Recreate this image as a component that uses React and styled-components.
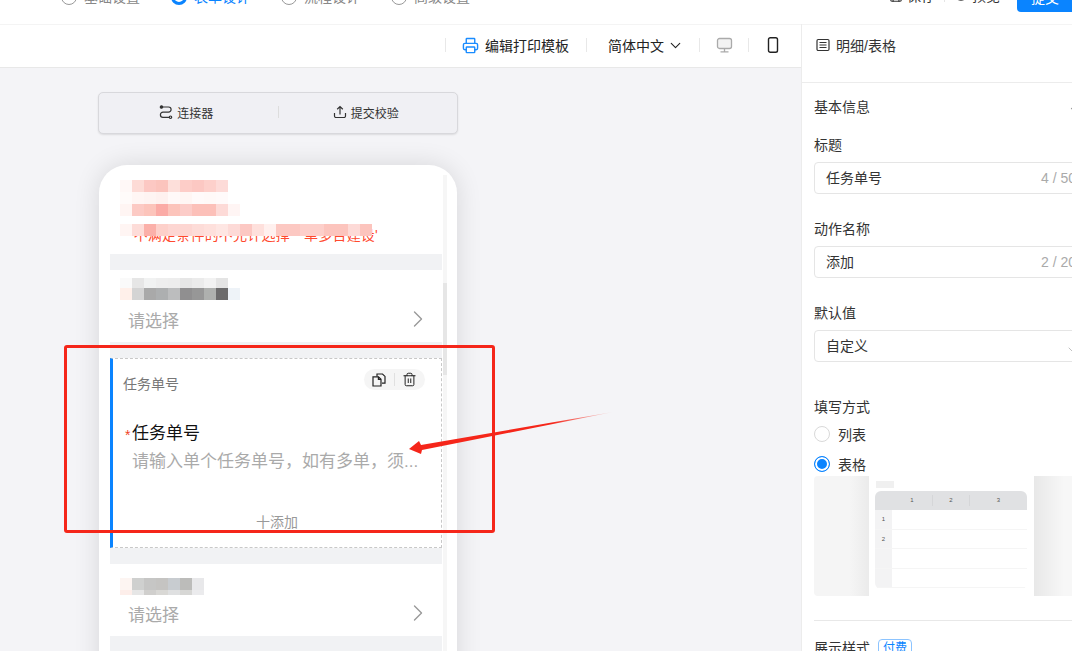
import styled, { createGlobalStyle } from 'styled-components'
import { ChevronDown, ChevronRight, ChevronUp, Printer, Save, Trash2, Eye } from 'lucide-react'

const GlobalStyle = createGlobalStyle`
    html, body {
        margin: 0;
        padding: 0;
        background: #fff;
        font-family: "Liberation Sans", "Noto Sans CJK SC", sans-serif;
        color: #222;
    }
    * {
        box-sizing: border-box;
    }
`

const steps = [
    { name: '基础设置', active: false },
    { name: '表单设计', active: true },
    { name: '流程设计', active: false },
    { name: '高级设置', active: false },
]

const mosaics = {
    top: [
        ['#fff8f7', '#fddbd6', '#fcc8c3', '#fbc4bd', '#fddfda', '#fdcdc8', '#fcc8c3', '#fdd0cb', '#fddbd8'],
        ['#fffbfa', '#fff6f4', '#fef4f2', '#fef1ef', '#fff9f8', '#fff6f4', '#fffafa', '#fff9f8', '#fffafa'],
        ['#fff5f3', '#fccac4', '#fcc4bb', '#fbaba6', '#fcc4bb', '#fcccc8', '#fcc0b9', '#fcc0b9', '#fddad7', '#fff5f4'],
    ],
    warn: [
        ['#fff5f3', '#fddcd8', '#fbb0a9', '#fdd0ca', '#fdd6d2', '#fdd6d2', '#fddcd8', '#fee0dc', '#fee6e3', '#fddad7', '#fcc8c3', '#fee0dc', '#fff0ee', '#fcc8c2', '#fcc8c2', '#fdcfca', '#fdcfca', '#fcc4bd', '#fcc4bd', '#fddad7', '#fcc4bd'],
    ],
    person: [
        ['#fafafa', '#e6e6e6', '#f1f2f2', '#eeeeee', '#ededed', '#e6e6e6', '#ebebeb', '#f2f2f2', '#e4e4e4'],
        ['#fff0ea', '#d4d4d4', '#a9a9a9', '#adafb0', '#bcbdbe', '#908f90', '#979797', '#aeb0ae', '#6c6b6c', '#eef3f8'],
    ],
    last: [
        ['#fdf5f2', '#cfd0cf', '#c6c6c5', '#c5c4c2', '#c8ccd0', '#bcbcba', '#e8e8ea'],
        ['#fdeeea', '#e6e6e6', '#d0cfcd', '#d9d8d5', '#dfe0e1', '#d7d7d5', '#ebebed'],
    ],
}

function Blur({ rows, h, top, cell = 12 }) {
    return (
        <MosaicBox $top={top}>
            {rows.map((row, i) => (
                <MosaicRow key={i}>
                    {row.map((c, j) => (
                        <MosaicCell key={j} $w={cell} $h={h[i]} $c={c} />
                    ))}
                </MosaicRow>
            ))}
        </MosaicBox>
    )
}

function PickerCard({ rows, h, top }) {
    return (
        <PickCard>
            <Blur rows={rows} h={h} top={top} />
            <PickLine>
                <span>请选择</span>
                <ChevronRight size={28} strokeWidth={1.2} color="#999" />
            </PickLine>
        </PickCard>
    )
}

export default function App() {
    return (
        <Page>
            <GlobalStyle />
            <TopBar>
                <Steps>
                    {steps.map((s) => (
                        <Step key={s.name} $active={s.active}>
                            <StepDot $active={s.active} />
                            {s.name}
                        </Step>
                    ))}
                </Steps>
                <TopActions>
                    <TopAction><Save size={14} />保存</TopAction>
                    <TopDivider />
                    <TopAction><Eye size={14} />预览</TopAction>
                    <SubmitBtn>提交</SubmitBtn>
                </TopActions>
            </TopBar>

            <Body>
                <Work>
                    <Toolbar>
                        <ToolDivider />
                        <PrintLink>
                            <Printer size={17} color="#1a8cff" strokeWidth={2} />
                            <span>编辑打印模板</span>
                        </PrintLink>
                        <ToolDivider />
                        <LangPick>
                            简体中文
                            <ChevronDown size={17} strokeWidth={1.6} />
                        </LangPick>
                        <ToolDivider />
                        <ToolIcon>
                            <svg width="17" height="17" viewBox="0 0 17 17" fill="none" stroke="#aaa" strokeWidth="1.3">
                                <rect x="1.5" y="1.5" width="14" height="10" rx="2" fill="#f3f3f3" />
                                <path d="M8.5 11.5v3M4.5 14.8h8" />
                            </svg>
                        </ToolIcon>
                        <ToolDivider />
                        <ToolIcon>
                            <svg width="12" height="16" viewBox="0 0 12 16" fill="none" stroke="#222" strokeWidth="1.4">
                                <rect x="1.5" y="0.8" width="9" height="14.4" rx="1.8" />
                            </svg>
                        </ToolIcon>
                    </Toolbar>

                    <Canvas>
                        <BtnGroup>
                            <GroupBtn>
                                <svg width="14" height="14" viewBox="0 0 14 14" fill="none" stroke="#333" strokeWidth="1.2">
                                    <circle cx="2.5" cy="2" r="1.2" fill="#333" />
                                    <path d="M3.5 2H9.5a2.6 2.6 0 0 1 0 5.2H4a2.6 2.6 0 0 0 0 5.2H10" />
                                    <circle cx="11.5" cy="12.2" r="1.2" />
                                </svg>
                                连接器
                            </GroupBtn>
                            <GroupLine />
                            <GroupBtn>
                                <svg width="14" height="14" viewBox="0 0 14 14" fill="none" stroke="#333" strokeWidth="1.2">
                                    <path d="M7 9.5V1.5M4.2 4.2 7 1.5l2.8 2.7M1.5 8v3a1.5 1.5 0 0 0 1.5 1.5h8a1.5 1.5 0 0 0 1.5-1.5V8" />
                                </svg>
                                提交校验
                            </GroupBtn>
                        </BtnGroup>

                        <Phone>
                            <ScrollTrack><ScrollThumb /></ScrollTrack>
                            <Screen>
                                <TopCard>
                                    <Blur rows={mosaics.top} h={[12, 12, 12]} top={5} />
                                    <WarnText>*不满足条件的不允许选择一单多台建设'</WarnText>
                                    <Blur rows={mosaics.warn} h={[12]} top={49} />
                                </TopCard>
                                <PickerCard rows={mosaics.person} h={[10, 12]} top={8} />
                                <ActiveCard>
                                    <CardHead>
                                        <CardName>任务单号</CardName>
                                        <CardTools>
                                            <svg width="14" height="14" viewBox="0 0 14 14" fill="none" stroke="#222" strokeWidth="1.2">
                                                <path d="M5 3.6V1h5.5L13 3.4V10.2h-3" />
                                                <path d="M1 3.8h5.5L9 6.2V13H1Z" />
                                                <path d="M6.4 3.8v2.6H9" />
                                            </svg>
                                            <CardToolLine />
                                            <Trash2 size={15} color="#222" strokeWidth={1.6} />
                                        </CardTools>
                                    </CardHead>
                                    <FieldTitle><Star>*</Star>任务单号</FieldTitle>
                                    <FieldHint>请输入单个任务单号，如有多单，须...</FieldHint>
                                    <AddLine>十添加</AddLine>
                                </ActiveCard>
                                <PickerCard rows={mosaics.last} h={[12, 5]} top={14} />
                            </Screen>
                        </Phone>
                    </Canvas>
                </Work>

                <Panel>
                    <PanelHead>
                        <svg width="14" height="14" viewBox="0 0 14 14" fill="none" stroke="#333" strokeWidth="1.2">
                            <rect x="1" y="1.5" width="12" height="11" rx="1.2" />
                            <path d="M3.5 4.5h7M3.5 7h7M3.5 9.5h7" />
                        </svg>
                        明细/表格
                    </PanelHead>
                    <PanelBody>
                        <SectionRow>
                            基本信息
                            <ChevronUp size={14} color="#999" />
                        </SectionRow>
                        <Label>标题</Label>
                        <InputBox>任务单号<Count>4 / 50</Count></InputBox>
                        <Label $gap>动作名称</Label>
                        <InputBox>添加<Count>2 / 20</Count></InputBox>
                        <Label $gap>默认值</Label>
                        <InputBox>
                            自定义
                            <SelectArrow><ChevronDown size={16} color="#bbb" strokeWidth={1.4} /></SelectArrow>
                        </InputBox>
                        <Label $big>填写方式</Label>
                        <RadioRow><Radio />列表</RadioRow>
                        <RadioRow $next><Radio $on />表格</RadioRow>
                        <Preview>
                            <PreviewSheet>
                                <PreviewTag />
                                <PreviewTable>
                                    <PreviewHead>
                                        <PreviewHeadCell $w={41}>1</PreviewHeadCell>
                                        <PreviewHeadCell $w={37}>2</PreviewHeadCell>
                                        <PreviewHeadCell $w={57} $last>3</PreviewHeadCell>
                                    </PreviewHead>
                                    {['1', '2', '', ''].map((n, i) => (
                                        <PreviewRow key={i}>
                                            <PreviewIndex>{n}</PreviewIndex>
                                        </PreviewRow>
                                    ))}
                                </PreviewTable>
                            </PreviewSheet>
                        </Preview>
                        <PanelLine />
                        <SectionRow>
                            展示样式
                            <PaidBadge>付费</PaidBadge>
                        </SectionRow>
                    </PanelBody>
                </Panel>
            </Body>

            <MarkBox />
            <MarkArrow width="220" height="50" viewBox="0 0 220 50">
                <defs>
                    <linearGradient id="arrowFade" x1="0" x2="1" y1="0" y2="0">
                        <stop offset="0.7" stopColor="#f5261a" />
                        <stop offset="1" stopColor="#f5261a" stopOpacity="0.1" />
                    </linearGradient>
                </defs>
                <path d="M3 39 L13 31 L15 35 L207 2 L16 40 L15 44 Z" fill="url(#arrowFade)" />
            </MarkArrow>
        </Page>
    )
}

//스타일
const Page = styled.div`
    position: relative;
    height: 100vh;
    overflow: hidden;
    display: flex;
    flex-direction: column;
    font-size: 14px;
`

const TopBar = styled.div`
    height: 24px;
    flex: none;
    display: flex;
    justify-content: space-between;
    align-items: flex-end;
    padding-left: 61px;
    overflow: hidden;
    background: #fff;
`

const Steps = styled.div`
    display: flex;
    gap: 31px;
    margin-bottom: 17px;
`

const Step = styled.div`
    display: flex;
    align-items: center;
    gap: 7px;
    line-height: 20px;
    white-space: nowrap;
    color: ${(p) => (p.$active ? '#0a84ff' : '#888')};
`

const StepDot = styled.i`
    width: 16px;
    height: 16px;
    border-radius: 50%;
    border: ${(p) => (p.$active ? '3px solid #0a84ff' : '1px solid #999')};
`

const TopActions = styled.div`
    display: flex;
    align-items: flex-end;
    color: #333;
`

const TopAction = styled.div`
    display: flex;
    align-items: center;
    gap: 4px;
    line-height: 20px;
    margin-bottom: 18px;
    white-space: nowrap;
`

const TopDivider = styled.div`
    width: 1px;
    height: 14px;
    margin: 0 9px 22px;
    background: #e5e5e5;
`

const SubmitBtn = styled.div`
    width: 70px;
    height: 36px;
    margin-left: 17px;
    margin-right: -15px;
    padding: 15px 0 0 14px;
    line-height: 14px;
    background: #0a84ff;
    border-radius: 4px;
    color: #fff;
    align-self: flex-end;
    margin-bottom: 12px;
`

const Body = styled.div`
    flex: 1;
    min-height: 0;
    display: flex;
`

const Work = styled.div`
    flex: 1;
    min-width: 0;
    display: flex;
    flex-direction: column;
`

const Toolbar = styled.div`
    height: 44px;
    flex: none;
    display: flex;
    justify-content: flex-end;
    align-items: center;
    padding: 0 4px 2px 0;
    background: #fff;
    border-top: 1px solid #f4f4f4;
    border-bottom: 1px solid #e8e8e8;
`

const ToolDivider = styled.div`
    width: 1px;
    height: 14px;
    background: #e8e8e8;
`

const PrintLink = styled.div`
    display: flex;
    align-items: center;
    gap: 6px;
    margin: 0 17px 0 16px;
    white-space: nowrap;
`

const LangPick = styled.div`
    display: flex;
    align-items: center;
    gap: 3px;
    margin: 0 15px 0 21px;
    white-space: nowrap;
`

const ToolIcon = styled.div`
    display: flex;
    justify-content: center;
    width: 48px;
`

const Canvas = styled.div`
    flex: 1;
    min-height: 0;
    padding: 24px 0 0 98px;
    background: #f4f4f7;
`

const BtnGroup = styled.div`
    width: 360px;
    height: 42px;
    display: flex;
    align-items: center;
    padding-bottom: 2px;
    background: #f0f0f4;
    border: 1px solid #d8d8dc;
    border-radius: 5px;
    box-shadow: 0 1px 2px rgba(0, 0, 0, 0.1);
    margin-bottom: 31px;
`

const GroupBtn = styled.div`
    flex: 1;
    display: flex;
    justify-content: center;
    align-items: center;
    gap: 4px;
    padding-right: 4px;
    font-size: 12px;
    color: #333;
`

const GroupLine = styled.div`
    width: 1px;
    height: 12px;
    background: #ddd;
`

const Phone = styled.div`
    position: relative;
    width: 358px;
    height: 560px;
    margin-left: 1px;
    padding: 10px 15px 0 11px;
    background: #fff;
    border-radius: 28px 28px 0 0;
    box-shadow: 0 0 26px rgba(0, 0, 0, 0.12);
`

const ScrollTrack = styled.div`
    position: absolute;
    top: 10px;
    right: 10px;
    bottom: 0;
    width: 4px;
    background: #f6f6f6;
`

const ScrollThumb = styled.div`
    position: absolute;
    top: 108px;
    left: 0;
    width: 4px;
    height: 92px;
    background: #e6e6e6;
`

const Screen = styled.div`
    height: 100%;
    display: flex;
    flex-direction: column;
    gap: 16px;
    background: #f1f2f4;
`

const MosaicBox = styled.div`
    position: absolute;
    top: ${(p) => p.$top}px;
    left: 10px;
`

const MosaicRow = styled.div`
    display: flex;
`

const MosaicCell = styled.div`
    width: ${(p) => p.$w}px;
    height: ${(p) => p.$h}px;
    background: ${(p) => p.$c};
`

const TopCard = styled.div`
    position: relative;
    height: 79px;
    flex: none;
    padding: 50px 0 0 18px;
    background: #fff;
`

const WarnText = styled.div`
    font-size: 14px;
    line-height: 20px;
    letter-spacing: 0.2px;
    color: #ff4a2e;
    white-space: nowrap;
`

const PickCard = styled.div`
    position: relative;
    height: 72px;
    flex: none;
    padding: 34px 10px 0 18px;
    background: #fff;
`

const PickLine = styled.div`
    display: flex;
    justify-content: space-between;
    align-items: center;
    height: 30px;
    font-size: 17px;
    color: #aaa;
`

const ActiveCard = styled.div`
    height: 190px;
    flex: none;
    display: flex;
    flex-direction: column;
    padding: 10px 16px 0 10px;
    background: #fff;
    border: 1px dashed #c8c8c8;
    border-left: 3px solid #0a84ff;
`

const CardHead = styled.div`
    display: flex;
    justify-content: space-between;
    align-items: flex-start;
    margin-bottom: 28px;
`

const CardName = styled.div`
    margin-top: 5px;
    line-height: 20px;
    color: #777;
`

const CardTools = styled.div`
    width: 61px;
    height: 21px;
    display: flex;
    justify-content: space-between;
    align-items: center;
    padding: 0 8px;
    background: #f5f5f5;
    border-radius: 11px;
`

const CardToolLine = styled.div`
    width: 1px;
    height: 13px;
    background: #e0e0e0;
`

const FieldTitle = styled.div`
    position: relative;
    padding-left: 7px;
    margin-left: 2px;
    line-height: 24px;
    font-size: 17px;
    color: #111;
`

const Star = styled.span`
    position: absolute;
    left: 0;
    top: 1px;
    font-size: 14px;
    color: #f0441f;
`

const FieldHint = styled.div`
    margin: 4px 0 0 9px;
    line-height: 24px;
    font-size: 17px;
    color: #aaa;
    white-space: nowrap;
`

const AddLine = styled.div`
    margin-top: 38px;
    padding-left: 6px;
    text-align: center;
    line-height: 20px;
    color: #999;
`

const Panel = styled.div`
    width: 271px;
    flex: none;
    overflow: hidden;
    background: #fff;
    border-left: 1px solid #ececec;
`

const PanelHead = styled.div`
    height: 59px;
    display: flex;
    align-items: center;
    gap: 6px;
    padding: 0 0 17px 14px;
    border-top: 1px solid #f4f4f4;
    border-bottom: 1px solid #ececec;
    color: #333;
`

const PanelBody = styled.div`
    width: 290px;
    padding: 14px 0 0 12px;
`

const SectionRow = styled.div`
    display: flex;
    align-items: center;
    gap: 8px;
    line-height: 20px;
    color: #333;
    white-space: nowrap;
    & > svg {
        margin-left: 190px;
    }
`

const Label = styled.div`
    margin-top: ${(p) => (p.$big ? 35 : p.$gap ? 25 : 18)}px;
    margin-bottom: 7px;
    line-height: 20px;
    color: #333;
`

const InputBox = styled.div`
    position: relative;
    width: 278px;
    height: 32px;
    padding: 0 11px;
    line-height: 30px;
    color: #333;
    border: 1px solid #e5e5e5;
    border-radius: 4px;
`

const Count = styled.span`
    position: absolute;
    top: 0;
    right: 15px;
    color: #aaa;
`

const SelectArrow = styled.span`
    position: absolute;
    top: 7px;
    left: 250px;
`

const RadioRow = styled.div`
    display: flex;
    align-items: center;
    gap: 8px;
    height: 20px;
    margin-top: ${(p) => (p.$next ? 10 : 0)}px;
    color: #333;
`

const Radio = styled.i`
    width: 16px;
    height: 16px;
    border-radius: 50%;
    background: ${(p) => (p.$on ? '#0a84ff' : '#fff')};
    border: 1px solid ${(p) => (p.$on ? '#0a84ff' : '#d9d9d9')};
    box-shadow: ${(p) => (p.$on ? 'inset 0 0 0 2px #fff' : 'none')};
`

const Preview = styled.div`
    width: 278px;
    height: 120px;
    margin-top: 2px;
    padding-left: 55px;
    background: linear-gradient(90deg, #f5f5f5 36px, #ebebeb 55px, #fff 55px, #fff 220px, #e8e8e8 220px, #f7f7f7 250px);
    border-radius: 4px;
`

const PreviewSheet = styled.div`
    width: 165px;
    height: 100%;
    padding: 5px 7px 0 6px;
    background: #fff;
`

const PreviewTag = styled.div`
    width: 18px;
    height: 7px;
    margin: 0 0 3px 1px;
    background: #f0f0f0;
`

const PreviewTable = styled.div`
    width: 152px;
    height: 98px;
    border-radius: 6px;
    overflow: hidden;
`

const PreviewHead = styled.div`
    height: 19px;
    display: flex;
    padding-left: 17px;
    background: #e0e1e3;
`

const PreviewHeadCell = styled.div`
    width: ${(p) => p.$w}px;
    margin: 4px 0;
    text-align: center;
    line-height: 11px;
    font-size: 6px;
    color: #555;
    border-right: ${(p) => (p.$last ? 'none' : '1px solid #d5d6d8')};
`

const PreviewRow = styled.div`
    height: 19.5px;
    border-bottom: 1px solid #f5f5f5;
`

const PreviewIndex = styled.div`
    width: 17px;
    height: 100%;
    text-align: center;
    line-height: 19px;
    font-size: 6px;
    color: #555;
    background: #f3f3f4;
`

const PanelLine = styled.div`
    height: 1px;
    margin: 24px 0 17px;
    background: #e8e8e8;
`

const PaidBadge = styled.span`
    padding: 0 4px;
    line-height: 17px;
    font-size: 12px;
    color: #0a84ff;
    border: 1px solid #8cc4ff;
    border-radius: 4px;
`

const MarkBox = styled.div`
    position: absolute;
    top: 345px;
    left: 64px;
    width: 431px;
    height: 188px;
    border: 3px solid #f5261a;
    border-radius: 3px;
    pointer-events: none;
`

const MarkArrow = styled.svg`
    position: absolute;
    top: 410px;
    left: 406px;
    pointer-events: none;
`
